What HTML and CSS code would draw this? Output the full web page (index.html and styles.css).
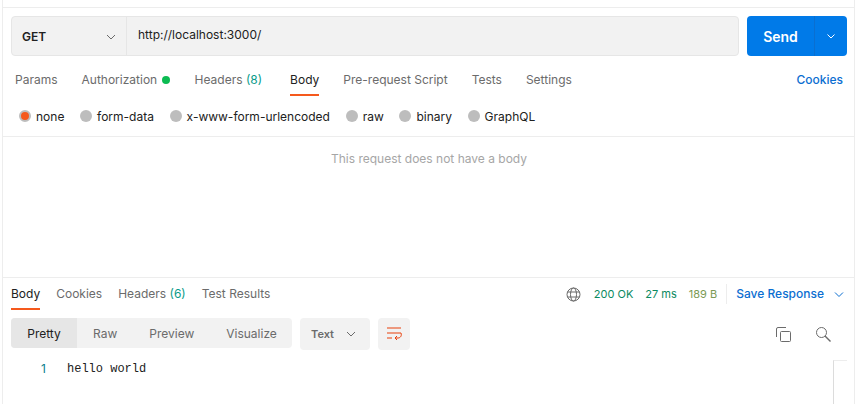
FILE: index.html
```html
<!DOCTYPE html>
<html>
<head>
<meta charset="utf-8">
<title>Request</title>
<link rel="stylesheet" href="styles.css">
</head>
<body>
<div class="app">
  <section class="request">
    <div class="urlbar">
      <div class="urlbox">
        <div class="method"><span>GET</span>
          <svg class="chev" width="12" height="12" viewBox="0 0 12 12"><path d="M2 4l4 4 4-4" fill="none" stroke="#6b6b6b"/></svg>
        </div>
        <div class="url">http://localhost:3000/</div>
      </div>
      <div class="send">
        <span class="send-label">Send</span>
        <span class="send-arrow"><svg width="12" height="12" viewBox="0 0 12 12"><path d="M2.500 4.500L6 8l3.500-3.500" fill="none" stroke="#fff"/></svg></span>
      </div>
    </div>
    <nav class="tabs">
      <span class="tab">Params</span>
      <span class="tab">Authorization <i class="dot"></i></span>
      <span class="tab">Headers <em>(8)</em></span>
      <span class="tab active">Body</span>
      <span class="tab">Pre-request Script</span>
      <span class="tab">Tests</span>
      <span class="tab">Settings</span>
      <span class="cookies">Cookies</span>
    </nav>
    <div class="radios">
      <label class="radio on"><i></i>none</label>
      <label class="radio"><i></i>form-data</label>
      <label class="radio"><i></i>x-www-form-urlencoded</label>
      <label class="radio"><i></i>raw</label>
      <label class="radio"><i></i>binary</label>
      <label class="radio"><i></i>GraphQL</label>
    </div>
  </section>
  <section class="empty">This request does not have a body</section>
  <section class="response">
    <div class="res-head">
      <nav class="res-tabs">
        <span class="rtab active">Body</span>
        <span class="rtab">Cookies</span>
        <span class="rtab">Headers <em>(6)</em></span>
        <span class="rtab">Test Results</span>
      </nav>
      <div class="meta">
        <svg class="globe" width="15" height="15" viewBox="0 0 15 15" fill="none" stroke="#6b6b6b"><circle cx="7.500" cy="7.500" r="6.500"/><ellipse cx="7.500" cy="7.500" rx="3" ry="6.500"/><path d="M1.500 5h12M1.500 10h12"/></svg>
        <span class="stat s1">200 OK</span>
        <span class="stat s2">27 ms</span>
        <span class="stat s3">189 B</span>
        <span class="save">Save Response
          <svg width="12" height="12" viewBox="0 0 12 12"><path d="M2 4.500l4 4 4-4" fill="none" stroke="#0b6ed1"/></svg>
        </span>
      </div>
    </div>
    <div class="toolbar">
      <div class="seg">
        <span class="seg-item active">Pretty</span>
        <span class="seg-item raw">Raw</span>
        <span class="seg-item preview">Preview</span>
        <span class="seg-item vis">Visualize</span>
      </div>
      <div class="format"><span>Text</span>
        <svg width="12" height="12" viewBox="0 0 12 12"><path d="M2 4l4 4 4-4" fill="none" stroke="#6b6b6b"/></svg>
      </div>
      <div class="wrap">
        <svg width="15" height="14" viewBox="0 0 15 14" fill="none" stroke="#e8400c"><path d="M0 1h14M0 6h14M0 11h5"/><path d="M14 6c1 2.500-.500 5-3 5H8M10 9l-2 2 2 2"/></svg>
      </div>
      <div class="actions">
        <svg width="15" height="15" viewBox="0 0 15 15" fill="none" stroke="#6b6b6b"><rect x="4.500" y="4.500" width="10" height="10" rx="1"/><path d="M.500 10V2a1.500 1.500 0 0 1 1.500-1.500h8"/></svg>
        <svg width="15" height="15" viewBox="0 0 15 15" fill="none" stroke="#6b6b6b"><circle cx="5.500" cy="5.500" r="5"/><path d="M9 9l5.500 5.500" stroke-width="1.400"/></svg>
      </div>
    </div>
    <div class="code">
      <span class="ln">1</span><code>hello world</code>
      <div class="scroll"></div>
    </div>
  </section>
</div>
</body>
</html>
```
FILE: styles.css
```css
* { box-sizing: border-box; }
html, body { margin: 0; height: 100%; background: #fff; }
body { overflow: hidden; font-family: Inter, "Liberation Sans", sans-serif; font-size: 12px; color: #6b6b6b; }
i, em { font-style: normal; }
.app {
  width: 853px; height: 404px; margin-left: 2px;
  border-left: 1px solid #ededed; border-right: 1px solid #ededed;
  display: flex; flex-direction: column; padding-top: 7px;
}
.request { border-top: 1px solid #ededed; border-bottom: 1px solid #ededed; height: 130px; padding: 8px 7px 0 8px; }
.urlbar { display: flex; gap: 8px; height: 40px; }
.urlbox { flex: 1; display: flex; background: #f2f2f2; border: 1px solid #e6e6e6; border-radius: 4px; }
.method { width: 115px; border-right: 1px solid #e6e6e6; display: flex; align-items: center; justify-content: space-between; padding: 0 9px 0 10px; font-weight: 600; color: #212121; }
.chev { margin-top: 1px; }
.url { padding: 0 11px; line-height: 36px; color: #212121; }
.send { width: 100px; background: #007ae8; border-radius: 4px; color: #fff; display: flex; align-items: center; }
.send-label { width: 67px; text-align: center; font-size: 14px; font-weight: 600; }
.send-arrow { flex: 1; height: 100%; border-left: 1px solid #0a6fd0; display: flex; align-items: center; justify-content: center; }
.tabs { display: flex; height: 38px; margin-top: 4px; align-items: flex-start; gap: 24px; padding-left: 4px; }
.tab { line-height: 40px; height: 36px; white-space: nowrap; }
.tab em, .rtab em { color: #0a9c8a; }
.tab.active { color: #212121; position: relative; margin-left: 4px; }
.tab.active::after, .rtab.active::after { content: ""; position: absolute; left: 0; right: 0; bottom: 0; height: 2px; background: #f5591d; }
.dot { display: inline-block; width: 8px; height: 8px; border-radius: 50%; background: #0cbb52; margin: 0 1px 0 1px; }
.cookies { margin-left: auto; line-height: 40px; color: #0b6ed1; font-weight: 500; padding-right: 4px; }
.radios { display: flex; gap: 15.700px; height: 36px; align-items: center; padding-left: 8px; }
.radio { display: flex; align-items: center; gap: 5px; color: #212121; }
.radio i { width: 12px; height: 12px; border-radius: 50%; background: #bdbdbd; }
.radio.on i { background: #f5591d; border: 2px solid #bdbdbd; }
.empty { height: 140px; padding: 14px 0 0 1px; text-align: center; color: #a6a6a6; line-height: 16px; }
.response { flex: 1; border-top: 1px solid #ededed; padding: 0 7px 0 8px; }
.res-head { display: flex; justify-content: space-between; height: 32px; }
.res-tabs { display: flex; gap: 16px; }
.rtab { line-height: 32px; height: 32px; position: relative; white-space: nowrap; }
.rtab.active { color: #212121; }
.meta { display: flex; align-items: center; gap: 12px; font-size: 11px; padding-right: 2px; }
.globe { margin-right: 1px; }
.s1, .s2 { color: #0b8a5f; }
.s3 { color: #7b9a55; }
.save { border-left: 1px solid #ededed; height: 20px; line-height: 20px; padding-left: 9px; margin-left: -3px; font-size: 12px; color: #0b6ed1; font-weight: 500; display: flex; align-items: center; gap: 9px; white-space: nowrap; }
.toolbar { display: flex; align-items: flex-start; margin-top: 8px; height: 32px; }
.seg { display: flex; height: 30px; width: 281px; background: #f2f2f2; border-radius: 4px; overflow: hidden; }
.seg-item { line-height: 31px; white-space: nowrap; }
.seg-item.active { width: 66px; background: #e6e6e6; color: #212121; text-align: center; }
.seg-item.raw { margin-left: 16px; }
.seg-item.preview { margin-left: 32px; }
.seg-item.vis { margin-left: 32px; }
.format { width: 70px; height: 32px; margin-left: 8px; background: #f2f2f2; border-radius: 4px; display: flex; align-items: center; justify-content: space-between; padding: 0 13px 0 11px; font-size: 11px; font-weight: 600; }
.wrap { width: 32px; height: 32px; margin-left: 8px; background: #f2f2f2; border-radius: 4px; display: flex; align-items: center; justify-content: center; }
.actions { margin-left: auto; display: flex; gap: 25px; padding: 9px 16px 0 0; }
.code { position: relative; display: flex; height: 54px; padding-top: 11px; font-size: 12px; }
.ln { width: 35px; text-align: right; line-height: 16px; color: #0a7f8c; }
code { margin-left: 21px; font-family: "Liberation Mono", monospace; font-size: 12px; line-height: 16px; color: #212121; }
.scroll { position: absolute; left: 822px; top: 10px; bottom: 0; width: 14px; border-left: 1px solid #dcdcdc; border-top: 1px solid #ededed; }
```
